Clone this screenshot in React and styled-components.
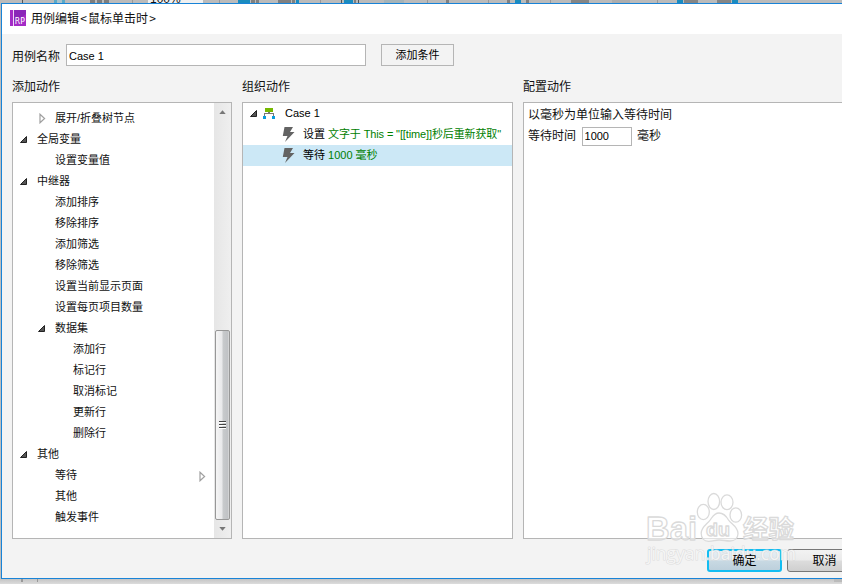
import React from "react";
import styled, { createGlobalStyle } from "styled-components";

const GlobalStyle = createGlobalStyle`
  * {
    box-sizing: border-box;
  }

  body {
    margin: 0;
    overflow: hidden;
    font-family: "Liberation Sans", "Noto Sans CJK SC", sans-serif;
    font-size: 12px;
    color: #111;
  }
`;

const Desktop = styled.div`
  display: flex;
  flex-direction: column;
  width: 842px;
  height: 584px;
  overflow: hidden;
  background: #bdbdbd;
`;

const ToolStrip = styled.div`
  display: flex;
  flex: none;
  height: 3px;
  overflow: hidden;
  background: #bbb;
`;

const StripCell = styled.div`
  flex: none;
  width: ${(props) => props.$w}px;
  height: 3px;
  background: ${(props) => props.$color || "transparent"};
`;

const ZoomBox = styled.div`
  flex: none;
  width: 55px;
  height: 3px;
  padding-left: 2px;
  overflow: hidden;
  background: #f0f0f0;
  font-size: 12px;
  line-height: 12px;

  span {
    display: block;
    margin-top: -7px;
  }
`;

const BottomStrip = styled.div`
  display: flex;
  flex: none;
  height: 5px;
  background: linear-gradient(#c4c4c4, #dcdcdc);
`;

const Dialog = styled.div`
  display: flex;
  flex-direction: column;
  flex: none;
  height: 576px;
  margin-left: 1px;
  border: 1px solid #1883d7;
  border-right: 0;
  background: #f3f3f3;
`;

const TitleBar = styled.div`
  display: flex;
  align-items: center;
  flex: none;
  height: 30px;
  padding: 0 0 2px 8px;
  background: #fff;
`;

const TitleText = styled.span`
  margin-left: 5px;
  font-family: "Noto Sans CJK SC", sans-serif;
  line-height: 20px;

  i {
    display: inline-block;
    width: 9px;
    font-style: normal;
    text-align: center;
  }
`;

const NameRow = styled.div`
  display: flex;
  flex: none;
  height: 42px;
  padding: 10px 0 0 10px;
`;

const NameLabel = styled.label`
  width: 54px;
  line-height: 26px;
`;

const TextInput = styled.input`
  width: ${(props) => props.$w}px;
  height: ${(props) => props.$h}px;
  padding: ${(props) => props.$pad || "1px"} 2px 0;
  border: 1px solid #b5b5b5;
  outline: none;
  background: #fff;
  color: #000;
  font: 11px "Liberation Sans", sans-serif;
`;

const ConditionButton = styled.button`
  width: 73px;
  height: 22px;
  margin-left: 15px;
  padding: 0;
  border: 1px solid #b5b5b5;
  background: #f3f3f3;
  color: #000;
  font: 11px/20px "Liberation Sans", "Noto Sans CJK SC", sans-serif;
`;

const Columns = styled.div`
  display: grid;
  grid-template-columns: 220px 271px 320px;
  column-gap: 10px;
  flex: none;
  padding-left: 10px;
`;

const ColumnTitle = styled.div`
  height: 26px;
  line-height: 22px;
`;

const Panel = styled.div`
  display: flex;
  height: 437px;
  border: 1px solid #b5b5b5;
  background: #fff;
`;

const Tree = styled.div`
  flex: 1;
  min-width: 0;
  padding-top: ${(props) => props.$top || 0}px;
`;

const TreeRow = styled.div`
  display: flex;
  align-items: center;
  height: 21px;
  padding-left: ${(props) => 6 + props.$level * 18}px;
  background: ${(props) => (props.$selected ? "#cce8f6" : "transparent")};
  font-size: 11px;
  line-height: 21px;
  white-space: pre;
`;

const Toggle = styled.span`
  display: flex;
  flex: none;
  width: 18px;
  padding-left: ${(props) => (props.$closed ? 2 : 0)}px;
`;

const RowArrow = styled.span`
  display: flex;
  margin-left: auto;
  padding: 1px 8px 0 0;
`;

const ActionRow = styled(TreeRow)`
  padding-left: ${(props) => props.$indent}px;
  color: #000;

  em {
    color: #008000;
    font-style: normal;
    letter-spacing: ${(props) => props.$spacing || 0}px;
  }
`;

const IconSlot = styled.span`
  display: flex;
  flex: none;
  width: ${(props) => props.$w}px;
`;

const ScrollTrack = styled.div`
  display: flex;
  flex-direction: column;
  align-items: center;
  flex: none;
  width: 17px;
  background: linear-gradient(90deg, #e6e6e6, #efefef);
`;

const ScrollCap = styled.div`
  display: flex;
  align-items: center;
  justify-content: center;
  flex: none;
  height: 17px;
`;

const ScrollThumb = styled.div`
  display: flex;
  flex-direction: column;
  align-items: center;
  justify-content: center;
  flex: none;
  width: 15px;
  height: 190px;
  margin-top: 210px;
  border: 1px solid #979797;
  border-radius: 2px;
  background: linear-gradient(90deg, #f5f5f5 0%, #e9e9eb 45%, #c8cacc 55%, #c0c2c5 90%, #dedede 100%);
`;

const Config = styled.div`
  padding: 0 3px 0 4px;
`;

const ConfigLine = styled.div`
  height: 22px;
  line-height: 24px;
`;

const DelayLine = styled(ConfigLine)`
  display: flex;
  align-items: center;
  gap: 5.5px;
`;

const Footer = styled.div`
  display: flex;
  gap: 5px;
  flex: none;
  padding: 10px 0 0 705px;
`;

const FooterButton = styled.button`
  flex: none;
  width: 75px;
  height: 23px;
  padding: 0;
  border: ${(props) => (props.$primary ? "2px solid #12bdf2" : "1px solid #777")};
  border-radius: 3px;
  background: ${(props) =>
    props.$primary
      ? "linear-gradient(#e5eef3 0%, #dce7ee 48%, #c8d9e3 52%, #bdd0dc 100%)"
      : "linear-gradient(#f2f2f2 0%, #ebebeb 48%, #dcdcdc 52%, #cfcfcf 100%)"};
  color: #000;
  font: 12px/18px "Liberation Sans", "Noto Sans CJK SC", sans-serif;

  span {
    position: relative;
    z-index: 2;
  }
`;

const Watermark = styled.div`
  position: absolute;
  left: 640px;
  top: 488px;
  z-index: 1;
  width: 160px;
  height: 84px;
  pointer-events: none;
`;

// kind is the toggle: "open", "closed" or none
const actions = [
  { text: "展开/折叠树节点", level: 1, kind: "closed" },
  { text: "全局变量", level: 0, kind: "open" },
  { text: "设置变量值", level: 1 },
  { text: "中继器", level: 0, kind: "open" },
  { text: "添加排序", level: 1 },
  { text: "移除排序", level: 1 },
  { text: "添加筛选", level: 1 },
  { text: "移除筛选", level: 1 },
  { text: "设置当前显示页面", level: 1 },
  { text: "设置每页项目数量", level: 1 },
  { text: "数据集", level: 1, kind: "open" },
  { text: "添加行", level: 2 },
  { text: "标记行", level: 2 },
  { text: "取消标记", level: 2 },
  { text: "更新行", level: 2 },
  { text: "删除行", level: 2 },
  { text: "其他", level: 0, kind: "open" },
  { text: "等待", level: 1, more: true },
  { text: "其他", level: 1 },
  { text: "触发事件", level: 1 },
];

// [width, color] pairs of the toolbar behind the dialog
const stripLeft = [
  [22], [1, "#555"], [31], [3, "#5aa9c8"], [5, "#a9c3cc"], [3, "#5aa9c8"],
  [25], [5, "#7d7d7d"], [2], [5, "#7d7d7d"], [2], [5, "#7d7d7d"], [23],
  [1, "#999"], [15],
];

const stripRight = [
  [16], [1, "#999"], [18], [12, "#1a8cbf"], [1], [4, "#808080"], [1],
  [3, "#808080"], [19], [13, "#808080"], [1], [3, "#808080"], [1],
  [3, "#1a8cbf"], [21], [1, "#999"], [20], [1, "#555"], [2],
  [9, "#1a8cbf"], [1], [2, "#808080"], [2], [1, "#555"], [25],
  [20, "#a5b3b8"], [23], [1, "#999"], [18], [3, "#808080"], [39],
  [1, "#999"], [18], [3, "#808080"], [5], [6, "#1a8cbf"], [5],
  [3, "#808080"], [21], [1, "#999"], [20], [18, "#858585"], [23],
  [18, "#adadad"], [27], [1, "#999"], [19], [6, "#1a8cbf"], [1],
  [14, "#858585"], [19], [14, "#858585"], [1], [6, "#1a8cbf"],
];

const stripBottom = [[21], [2, "#999"], [14], [1, "#999"], [796], [8, "#bbb"]];

const OpenArrow = () => (
  <svg width="9" height="9" viewBox="0 0 9 9">
    <path d="M7.5 1.5v6h-6z" fill="#555" stroke="#222" />
  </svg>
);

const ClosedArrow = () => (
  <svg width="7" height="11" viewBox="0 0 7 11">
    <path d="M1 1.2v8.6l4.6-4.3z" fill="#fff" stroke="#a0a0a0" strokeWidth="1.2" />
  </svg>
);

const AppLogo = () => (
  <svg width="16" height="16" viewBox="0 0 16 16">
    <path d="M0 0h16v16H0z" fill="#a32bc6" />
    <path d="M4 0h12v4L4 13z" fill="#8a26b8" />
    <path d="M3 0h1v16H3z" fill="#f0d5f5" />
    <text
      x="4.8"
      y="14"
      fill="#fff"
      fontSize="8"
      textLength="10"
      lengthAdjust="spacingAndGlyphs"
      fontFamily="DejaVu Sans"
    >
      RP
    </text>
  </svg>
);

const CaseIcon = () => (
  <svg width="12" height="11" viewBox="0 0 12 11" shapeRendering="crispEdges">
    <path d="M2 0h8v4H2z" fill="#76b900" />
    <path d="M5 4h2v1h4v3h-1V6H2v2H1V5h4z" fill="#777" />
    <path d="M0 8h3v3H0zM9 8h3v3H9z" fill="#0a9bdc" />
  </svg>
);

const BoltIcon = () => (
  <svg width="13" height="15" viewBox="0 0 13 15">
    <path d="M2.5 0H11L8 5H12.5L3 15 5.5 9H0.8z" fill="#636363" />
  </svg>
);

const ScrollArrow = ({ down }) => (
  <svg width="7" height="4" viewBox="0 0 7 4">
    <path d={down ? "M0.3 0h6.4L3.5 3.8z" : "M0.3 4h6.4L3.5 0.2z"} fill="#777" />
  </svg>
);

const ThumbGrip = () => (
  <svg width="7" height="8" viewBox="0 0 7 8" shapeRendering="crispEdges">
    <path d="M0 0h7v1H0zM0 3h7v1H0zM0 6h7v1H0z" fill="#444" />
    <path d="M0 1h7v1H0zM0 4h7v1H0zM0 7h7v1H0z" fill="#fff" />
  </svg>
);

const BaiduMark = () => (
  <svg width="160" height="84" viewBox="0 0 160 84">
    <g
      fill="#fff"
      fillOpacity="0.6"
      stroke="#dadada"
      strokeWidth="1.3"
      strokeLinejoin="round"
      fontFamily='"Liberation Sans", "Noto Sans CJK SC", sans-serif'
      fontWeight="700"
    >
      <ellipse cx="63.3" cy="24" rx="6" ry="7.6" />
      <ellipse cx="73.8" cy="13.5" rx="5.8" ry="8" />
      <ellipse cx="87" cy="14.3" rx="6" ry="7.4" />
      <ellipse cx="95.8" cy="27" rx="5.8" ry="7.2" />
      <path d="M79 25c5 0 7.5 3.5 9.5 7 2.5 4 9.5 6.5 9.5 13.5 0 5-3.5 7.5-8 7.5-4 0-7-1-11-1s-6 1.3-10.500 1.3c-4.500 0-7.300-3.300-7.300-8 0-6.500 6-9 9-13.300 2.500-3.500 3.800-7 8.800-7z" />
      <text x="6" y="52" fontSize="34" textLength="51" lengthAdjust="spacingAndGlyphs">
        Bai
      </text>
      <text x="66" y="48" fontSize="19" textLength="24" lengthAdjust="spacingAndGlyphs">
        du
      </text>
      <text x="103" y="49.5" fontSize="25" textLength="51" lengthAdjust="spacingAndGlyphs">
        经验
      </text>
    </g>
    <text
      x="7"
      y="72"
      fill="#fff"
      fillOpacity="0.7"
      stroke="#d4d4d4"
      strokeOpacity="0.7"
      strokeWidth="1.2"
      paintOrder="stroke"
      fontFamily='"Open Sans", "Liberation Sans", sans-serif'
      fontSize="18"
      textLength="149"
      lengthAdjust="spacingAndGlyphs"
    >
      jingyan.baidu.com
    </text>
  </svg>
);

const Strip = ({ cells }) =>
  cells.map(([w, color], i) => <StripCell key={i} $w={w} $color={color} />);

const App = () => (
  <>
    <GlobalStyle />
    <Desktop>
      <ToolStrip>
        <Strip cells={stripLeft} />
        <ZoomBox>
          <span>100%</span>
        </ZoomBox>
        <Strip cells={stripRight} />
      </ToolStrip>
      <Dialog>
        <TitleBar>
          <AppLogo />
          <TitleText>
            用例编辑<i>&lt;</i>鼠标单击时<i>&gt;</i>
          </TitleText>
        </TitleBar>
        <NameRow>
          <NameLabel htmlFor="caseName">用例名称</NameLabel>
          <TextInput id="caseName" $w={300} $h={22} defaultValue="Case 1" />
          <ConditionButton>添加条件</ConditionButton>
        </NameRow>
        <Columns>
          <div>
            <ColumnTitle>添加动作</ColumnTitle>
            <Panel>
              <Tree $top={5}>
                {actions.map((action, i) => (
                  <TreeRow key={i} $level={action.level}>
                    <Toggle $closed={action.kind === "closed"}>
                      {action.kind === "open" && <OpenArrow />}
                      {action.kind === "closed" && <ClosedArrow />}
                    </Toggle>
                    {action.text}
                    {action.more && (
                      <RowArrow>
                        <ClosedArrow />
                      </RowArrow>
                    )}
                  </TreeRow>
                ))}
              </Tree>
              <ScrollTrack>
                <ScrollCap>
                  <ScrollArrow />
                </ScrollCap>
                <ScrollThumb>
                  <ThumbGrip />
                </ScrollThumb>
                <ScrollCap>
                  <ScrollArrow down />
                </ScrollCap>
              </ScrollTrack>
            </Panel>
          </div>
          <div>
            <ColumnTitle>组织动作</ColumnTitle>
            <Panel>
              <Tree>
                <ActionRow $indent={6}>
                  <IconSlot $w={14}>
                    <OpenArrow />
                  </IconSlot>
                  <IconSlot $w={22}>
                    <CaseIcon />
                  </IconSlot>
                  Case 1
                </ActionRow>
                <ActionRow $indent={39} $spacing={-0.12}>
                  <IconSlot $w={21}>
                    <BoltIcon />
                  </IconSlot>
                  设置 <em>文字于 This = "[[time]]秒后重新获取"</em>
                </ActionRow>
                <ActionRow $indent={39} $selected>
                  <IconSlot $w={21}>
                    <BoltIcon />
                  </IconSlot>
                  等待 <em>1000 毫秒</em>
                </ActionRow>
              </Tree>
            </Panel>
          </div>
          <div>
            <ColumnTitle>配置动作</ColumnTitle>
            <Panel>
              <Config>
                <ConfigLine>以毫秒为单位输入等待时间</ConfigLine>
                <DelayLine>
                  等待时间
                  <TextInput $w={50} $h={19} $pad="0" defaultValue="1000" />
                  毫秒
                </DelayLine>
              </Config>
            </Panel>
          </div>
        </Columns>
        <Footer>
          <FooterButton $primary>
            <span>确定</span>
          </FooterButton>
          <FooterButton>
            <span>取消</span>
          </FooterButton>
        </Footer>
      </Dialog>
      <BottomStrip>
        <Strip cells={stripBottom} />
      </BottomStrip>
    </Desktop>
    <Watermark>
      <BaiduMark />
    </Watermark>
  </>
);

export default App;
